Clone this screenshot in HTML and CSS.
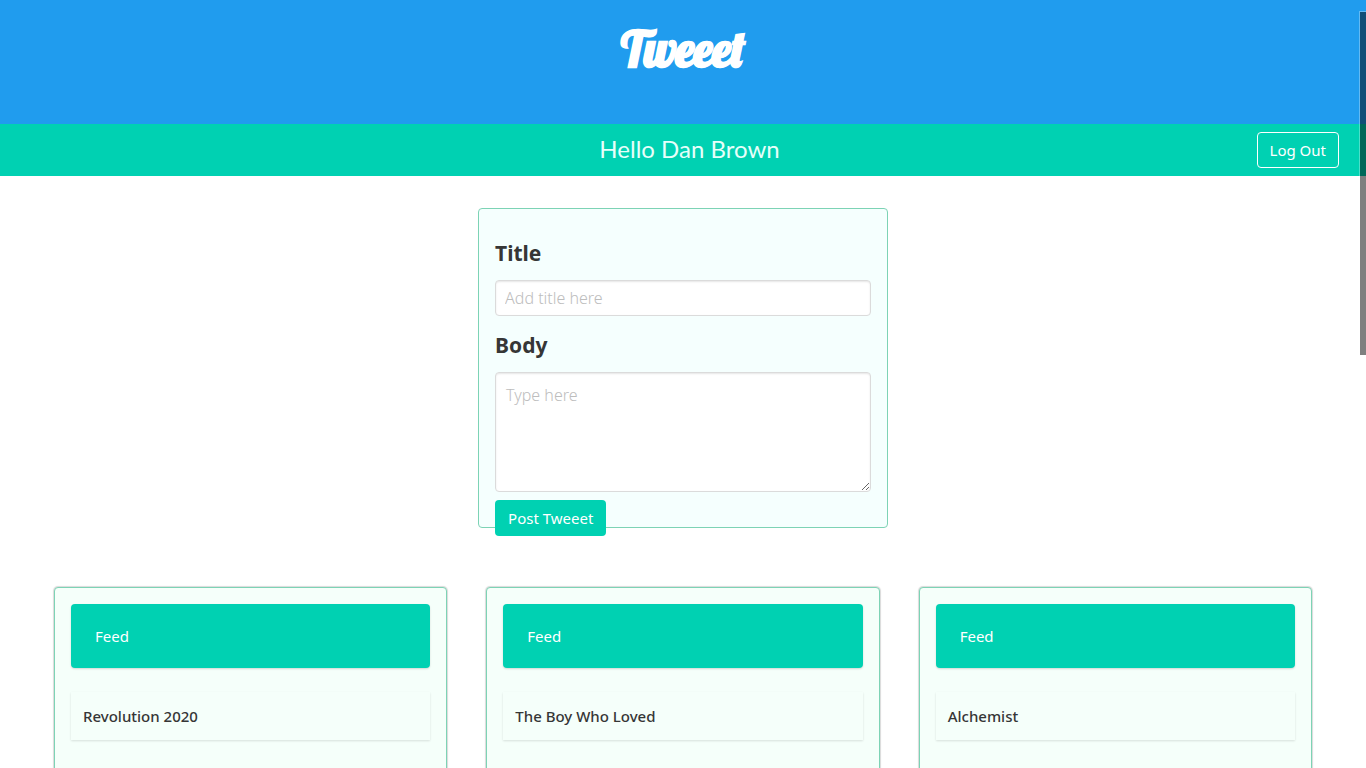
FILE: index.html
```
<!DOCTYPE html>
<html lang="en">
<head>
<meta charset="utf-8">
<title>Tweeet</title>
<link rel="stylesheet" href="styles.css">
</head>
<body>
<header class="hero">
  <h1 class="logo">Tweeet</h1>
</header>
<nav class="navbar">
  <p class="greeting">Hello Dan Brown</p>
  <button class="button logout" type="button">Log Out</button>
</nav>
<main>
  <form class="composer">
    <label class="field-label" for="title">Title</label>
    <input class="input" id="title" type="text" placeholder="Add title here">
    <label class="field-label" for="body">Body</label>
    <textarea class="input textarea" id="body" placeholder="Type here"></textarea>
    <button class="button primary" type="button">Post Tweeet</button>
  </form>
  <section class="feeds">
    <article class="feed">
      <div class="feed-banner">Feed</div>
      <h2 class="feed-title">Revolution 2020</h2>
    </article>
    <article class="feed">
      <div class="feed-banner">Feed</div>
      <h2 class="feed-title">The Boy Who Loved</h2>
    </article>
    <article class="feed">
      <div class="feed-banner">Feed</div>
      <h2 class="feed-title">Alchemist</h2>
    </article>
  </section>
</main>
<div class="scroll-thumb" aria-hidden="true"></div>
</body>
</html>
```
FILE: styles.css
```
* {
  box-sizing: border-box;
}

html {
  scrollbar-width: none;
}

body {
  margin: 0;
  background: #fff;
  color: #363636;
  font-family: "Noto Sans", "Open Sans", sans-serif;
  font-size: 15px;
  line-height: 24px;
}

.hero {
  height: 124px;
  padding-top: 19px;
  background: #209cee;
  text-align: center;
}

.logo {
  margin: 0;
  color: #fff;
  font-family: "Lobster", "Liberation Serif", serif;
  font-size: 48px;
  font-weight: 700;
  line-height: 60px;
  -webkit-text-stroke: 1px #fff;
}

.navbar {
  display: grid;
  grid-template-columns: 1fr auto 1fr;
  align-items: center;
  height: 52px;
  padding: 0 27px 0 40px;
  background: #00d1b2;
}

.greeting {
  grid-column: 2;
  margin: 0;
  padding-bottom: 2px;
  color: #e6fffa;
  font-family: "Muli", "Lato", sans-serif;
  font-size: 24px;
  line-height: 32px;
}

.button {
  height: 36px;
  padding: 0 12px;
  border: 1px solid transparent;
  border-radius: 4px;
  color: #fff;
  font: inherit;
  cursor: pointer;
}

.logout {
  justify-self: end;
  border-color: #fff;
  background: transparent;
}

.primary {
  align-self: flex-start;
  flex-shrink: 0;
  margin-top: 8px;
  background: #00d1b2;
}

.composer {
  display: flex;
  flex-direction: column;
  width: 30%;
  height: 320px;
  margin: 32px auto 59px;
  padding: 15px 16px;
  border: 1px solid #7dd3b5;
  border-radius: 4px;
  background: #f5fffe;
}

.field-label {
  margin: 13px 0 11px;
  font-size: 21px;
  font-weight: 700;
  line-height: 32px;
}

.input {
  width: 100%;
  height: 36px;
  flex-shrink: 0;
  padding: 0 9px;
  border: 1px solid #dbdbdb;
  border-radius: 4px;
  background: #fff;
  box-shadow: inset 0 1px 2px rgba(10, 10, 10, 0.1);
  color: #363636;
  font: inherit;
  font-size: 16px;
}

.input::placeholder {
  color: #bdbdbd;
  font-weight: 300;
  opacity: 1;
}

.textarea {
  height: 120px;
  padding: 10px;
  resize: vertical;
}

.feeds {
  display: grid;
  grid-template-columns: repeat(3, 1fr);
  gap: 39px;
  padding: 0 54px 40px;
}

.feed {
  min-height: 400px;
  padding: 16px;
  border: 1px solid #7dd3b5;
  border-radius: 4px;
  background: #f5fffa;
  box-shadow: 0 0 1px 1px rgba(10, 10, 10, 0.15);
}

.feed-banner {
  padding: 20px 24px;
  border-radius: 4px;
  background: #00d1b2;
  box-shadow: 0 1px 2px rgba(10, 10, 10, 0.15);
  color: #fff;
}

.feed-title {
  margin: 24px 0 0;
  padding: 12px;
  box-shadow: 0 1px 2px rgba(10, 10, 10, 0.12);
  font-size: 15px;
  font-weight: 500;
}

/* Overlay scroll indicator */
.scroll-thumb {
  position: fixed;
  top: 11px;
  right: 0;
  width: 7px;
  height: 344px;
  border: solid rgba(255, 255, 255, 0.3);
  border-width: 1px 0 0 1px;
  background: rgba(0, 0, 0, 0.5);
  background-clip: padding-box;
}
```
